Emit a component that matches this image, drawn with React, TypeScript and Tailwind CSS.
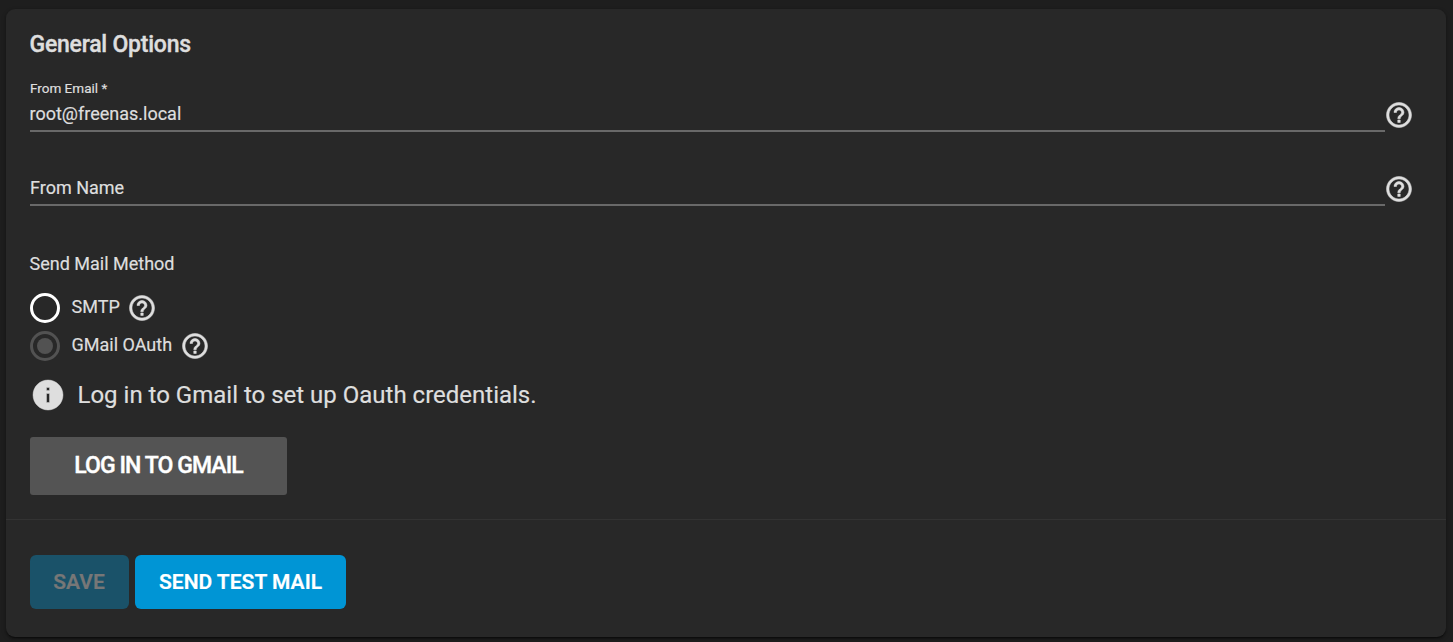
import React from 'react';
import { MdHelpOutline, MdInfo } from 'react-icons/md';

function Help({ className = '' }: { className?: string }) {
  return (
    <MdHelpOutline
      className={`size-[30px] shrink-0 [&_path]:stroke-[#dedede] [&_path]:[stroke-width:0.4] [&_path[fill=none]]:stroke-none ${className}`}
    />
  );
}

export default function App() {
  return (
    <div className="flex h-[642px] w-full flex-col overflow-hidden bg-[#1e1e1e] pt-[9px] pr-[7px] pl-[6px] font-['Roboto',sans-serif] text-[#dedede] [-webkit-text-stroke:0.2px]">
      <main className="flex h-[628px] flex-col rounded-[9px] bg-[#282828] shadow-[0_3px_2px_-2px_rgba(0,0,0,0.4),0_1px_2px_rgba(0,0,0,0.28),0_2px_5px_rgba(0,0,0,0.24)]">
        <section className="flex h-[511px] flex-col items-start border-b border-[#333333] px-6">
          <h1 className="-ml-[0.5px] mt-5 h-8 text-[23px] leading-8 font-medium tracking-[-0.23px] [-webkit-text-stroke:0.4px]">
            General Options
          </h1>

          <div className="mt-[18px] flex h-[53px] w-full">
            <div className="flex w-[1355px] flex-col border-b-2 border-[#696969]">
              <label className="h-[17px] text-[13.5px] leading-[19px]">From Email *</label>
              <span className="-ml-[0.5px] mt-[6px] text-[18px] leading-6">root@freenas.local</span>
            </div>
            <Help className="-ml-px mt-[21px]" />
          </div>

          <div className="mt-[43px] flex h-[31px] w-full">
            <div className="w-[1355px] border-b-2 border-[#696969] pt-px">
              <label className="block text-[18px] leading-6">From Name</label>
            </div>
            <Help className="-mt-px -ml-px" />
          </div>

          <h2 className="-ml-[0.5px] mt-[46px] h-6 text-[18px] leading-6">Send Mail Method</h2>

          <div className="mt-[13px] flex h-[38px] items-center">
            <span className="size-[30px] rounded-full border-3 border-white" />
            <span className="ml-[11.5px] -translate-y-px text-[18px] leading-6">SMTP</span>
            <Help className="ml-[7.5px]" />
          </div>
          <div className="flex h-[38px] items-center">
            <span className="flex size-[30px] items-center justify-center rounded-full border-3 border-[#525252]">
              <span className="size-4 rounded-full bg-[#525252]" />
            </span>
            <span className="ml-[11.5px] -translate-y-px text-[18px] leading-6">GMail OAuth</span>
            <Help className="ml-[7.5px]" />
          </div>

          <div className="mt-3 flex h-9 items-center">
            <MdInfo className="-ml-[0.5px] size-9 [&_path]:stroke-[#dedede] [&_path]:[stroke-width:0.3] [&_path[fill=none]]:stroke-none" />
            <span className="ml-3 text-[24px] leading-8">Log in to Gmail to set up Oauth credentials.</span>
          </div>

          <button className="mt-6 h-[58px] w-[257px] rounded-[3px] bg-[#545454] text-[23px] font-medium tracking-[-0.92px] text-white [-webkit-text-stroke:0.4px]">
            LOG IN TO GMAIL
          </button>
        </section>

        <footer className="flex gap-1.5 px-6 pt-[35px]">
          <button className="h-[54px] w-[99px] rounded-[6px] bg-[#1a5269] pt-0.5 pr-px text-[21px] font-semibold text-[#777777]">SAVE</button>
          <button className="h-[54px] w-[211px] rounded-[6px] bg-[#0095d5] pt-0.5 text-[21px] font-semibold text-white">SEND TEST MAIL</button>
        </footer>
      </main>
    </div>
  );
}
